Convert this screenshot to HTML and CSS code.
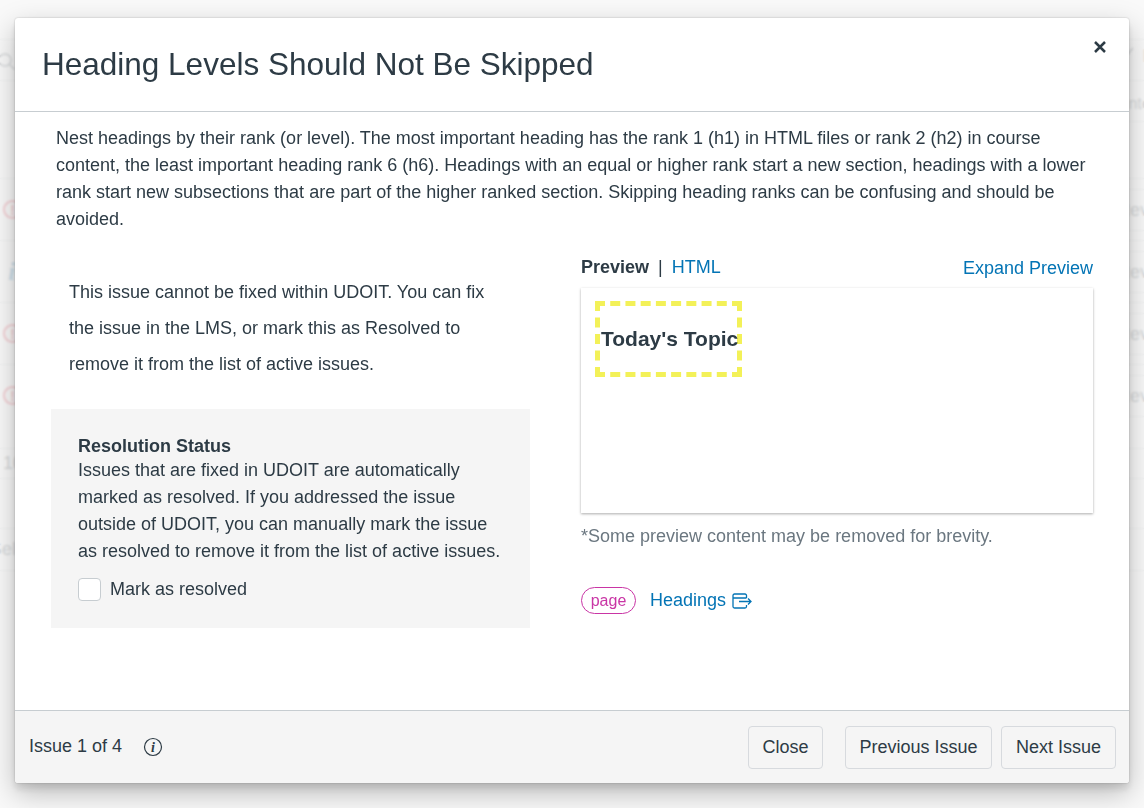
FILE: index.html
```html
<!DOCTYPE html>
<html lang="en">
<head>
    <meta charset="UTF-8">
    <title>Heading Levels Should Not Be Skipped</title>
    <link rel="stylesheet" href="styles.css">
</head>
<body>
<div class="page">
    <div class="toolbar">
        <svg class="search" width="24" height="24" viewBox="0 0 24 24"><circle cx="5" cy="12" r="6"/><path d="M9.500 16.500l5 5"/></svg>
        <div class="filter">
            <svg class="chev" width="12" height="8" viewBox="0 0 12 8"><path d="M1 1l5 6 5-6"/></svg>
            <span class="filter-r">I</span>
        </div>
    </div>
    <div class="thead"><span></span><span class="thead-r">Interact</span></div>
    <div class="row"><span class="alert">!</span><span class="review">Review</span></div>
    <div class="row"><span class="info">i</span><span class="review">Review</span></div>
    <div class="row"><span class="alert">!</span><span class="review">Review</span></div>
    <div class="row"><span class="alert">!</span><span class="review">Review</span></div>
    <div class="pager">10</div>
    <div class="foot">Select</div>
</div>
<div class="overlay"></div>

<div class="modal">
    <div class="modal-head">
        <h1>Heading Levels Should Not Be Skipped</h1>
        <svg class="close-x" width="14" height="14" viewBox="0 0 14 14"><path d="M2 2l10 10M12 2L2 12"/></svg>
    </div>
    <div class="modal-body">
        <p class="desc">Nest headings by their rank (or level). The most important heading has the rank 1 (h1) in HTML files or rank 2 (h2) in course content, the least important heading rank 6 (h6). Headings with an equal or higher rank start a new section, headings with a lower rank start new subsections that are part of the higher ranked section. Skipping heading ranks can be confusing and should be avoided.</p>
        <div class="cols">
            <div class="left">
                <p class="cannot">This issue cannot be fixed within UDOIT. You can fix the issue in the LMS, or mark this as Resolved to remove it from the list of active issues.</p>
                <div class="status">
                    <div class="status-title">Resolution Status</div>
                    <div class="status-text">Issues that are fixed in UDOIT are automatically marked as resolved. If you addressed the issue outside of UDOIT, you can manually mark the issue as resolved to remove it from the list of active issues.</div>
                    <label class="check"><span class="box"></span>Mark as resolved</label>
                </div>
            </div>
            <div class="right">
                <div class="tabs">
                    <div><b>Preview</b><span class="sep">|</span><a class="link">HTML</a></div>
                    <a class="link expand">Expand Preview</a>
                </div>
                <div class="preview">
                    <div class="flagged">Today's Topic</div>
                </div>
                <p class="note">*Some preview content may be removed for brevity.</p>
                <div class="meta">
                    <span class="pill">page</span>
                    <a class="link">Headings</a>
                    <svg class="ext" width="20" height="16" viewBox="0 0 20 16"><path d="M14.500 5V2.500a1.500 1.500 0 0 0-1.500-1.500H2.500A1.500 1.500 0 0 0 1 2.500v11A1.500 1.500 0 0 0 2.500 15H13a1.500 1.500 0 0 0 1.500-1.500V12M1 5h13.500M7 8.500h12M16 5.500l3 3-3 3"/></svg>
                </div>
            </div>
        </div>
    </div>
    <div class="modal-foot">
        <span class="count">Issue 1 of 4</span>
        <svg class="info-ico" width="20" height="20" viewBox="0 0 20 20"><circle cx="10" cy="10" r="8.500"/><text x="10" y="15" text-anchor="middle">i</text></svg>
        <button class="btn btn-close">Close</button>
        <button class="btn btn-prev">Previous Issue</button>
        <button class="btn">Next Issue</button>
    </div>
</div>
</body>
</html>
```

FILE: styles.css
```css
*{
    box-sizing: border-box;
    padding: 0;
    margin: 0;
}
html,body{
    height: 100%;
    overflow: hidden;
}
body{
    font-family: "Liberation Sans", Arial, sans-serif;
    font-size: 18px;
    color: #2D3B45;
    background: #fff;
}

/* page behind the dialog */
.page{
    width: 1144px;
    height: 808px;
    padding-top: 39px;
    overflow: hidden;
    color: #2D3B45;
}
.toolbar{
    height: 42px;
    display: flex;
    justify-content: space-between;
    align-items: center;
    border-top: 1px solid #c7cdd1;
    border-bottom: 1px solid #c7cdd1;
}
.search{
    fill: none;
    stroke: #2D3B45;
    stroke-width: 1.500;
}
.filter{
    display: flex;
    align-items: center;
    gap: 8px;
}
.chev{
    margin-bottom: 18px;
    fill: none;
    stroke: #2D3B45;
    stroke-width: 1.500;
}
.filter-r{
    width: 2px;
    margin-bottom: 8px;
    overflow: hidden;
}
.thead{
    height: 97px;
    display: flex;
    justify-content: space-between;
    padding-top: 14px;
    font-size: 16px;
}
.thead-r{
    height: 27px;
    width: 60px;
    margin-right: -45px;
    border-bottom: 1px solid #c7cdd1;
    text-indent: -5px;
    white-space: nowrap;
    overflow: hidden;
}
.row{
    height: 62px;
    display: flex;
    justify-content: space-between;
    align-items: center;
    border-top: 1px solid #c7cdd1;
}
.alert{
    width: 19px;
    height: 19px;
    margin-left: 3px;
    border: 2px solid #e0061f;
    border-radius: 50%;
    color: #e0061f;
    font-weight: bold;
    font-size: 15px;
    line-height: 15px;
    text-align: center;
}
.info{
    margin-left: 8px;
    font-family: "Liberation Serif", serif;
    font-style: italic;
    font-weight: bold;
    font-size: 26px;
    color: #0374B5;
}
.review{
    width: 60px;
    height: 42px;
    margin-right: -44px;
    border: 1px solid #c7cdd1;
    line-height: 40px;
    font-size: 18px;
    text-indent: -12px;
    white-space: nowrap;
}
.pager{
    height: 31px;
    margin-top: 22px;
    border-top: 1px solid #c7cdd1;
    border-bottom: 1px solid #c7cdd1;
    padding-left: 3px;
    line-height: 29px;
}
.foot{
    height: 43px;
    margin-top: 49px;
    border-top: 1px solid #c7cdd1;
    border-bottom: 1px solid #c7cdd1;
    line-height: 40px;
    text-indent: -10px;
}
.overlay{
    position: fixed;
    top: 0;
    left: 0;
    right: 0;
    bottom: 0;
    background: rgba(248,248,248,0.84);
    backdrop-filter: blur(1px);
}

/* dialog */
.modal{
    position: fixed;
    left: 15px;
    top: 18px;
    width: 1114px;
    height: 765px;
    display: flex;
    flex-direction: column;
    background: #fff;
    border-radius: 3px;
    box-shadow: 0 0 2px rgba(0,0,0,0.25), 0 6px 7px rgba(0,0,0,0.1), 0 10px 28px rgba(0,0,0,0.25);
}
.modal-head{
    height: 94px;
    padding: 26px 27px 0;
    border-bottom: 1px solid #c7cdd1;
    display: flex;
    justify-content: space-between;
}
h1{
    font-size: 31.500px;
    font-weight: normal;
    line-height: 40px;
}
.close-x{
    margin: -4px -5px 0 0;
    fill: none;
    stroke: #2D3B45;
    stroke-width: 2.500;
}
.modal-body{
    flex: 1;
    padding: 13px 41px 0;
}
.desc{
    line-height: 27px;
}
.cols{
    display: flex;
    margin: 21px -5px 0 -5px;
    gap: 51px;
}
.left{
    width: 479px;
    flex-shrink: 0;
}
.cannot{
    padding: 0 18px;
    line-height: 36px;
    margin-top: 20px;
}
.status{
    margin-top: 27px;
    height: 219px;
    padding: 27px;
    background: #f5f5f5;
    line-height: 27px;
}
.status-title{
    font-weight: bold;
    line-height: 21px;
}
.check{
    display: flex;
    align-items: center;
    gap: 9px;
    margin-top: 11px;
}
.box{
    width: 23px;
    height: 23px;
    background: #fff;
    border: 1px solid #c7cdd1;
    border-radius: 4px;
}
.right{
    width: 512px;
    flex-shrink: 0;
}
.tabs{
    display: flex;
    justify-content: space-between;
    line-height: 27px;
    height: 34px;
}
.sep{
    margin: 0 9px;
}
.link{
    color: #0374B5;
}
.expand{
    padding-top: 1px;
}
.preview{
    height: 225px;
    padding: 13px 14px;
    box-shadow: 0 1px 3px rgba(0,0,0,0.2), 0 1px 2px rgba(0,0,0,0.15);
}
.flagged{
    width: 147px;
    height: 76px;
    padding-left: 1px;
    border: 5px dashed #f3f158;
    line-height: 65px;
    font-size: 21px;
    font-weight: bold;
    white-space: nowrap;
}
.note{
    margin-top: 10px;
    line-height: 27px;
    color: #6B7780;
}
.meta{
    display: flex;
    align-items: center;
    margin-top: 37px;
}
.pill{
    height: 27px;
    width: 55px;
    margin-right: 14px;
    border: 1px solid #C935A5;
    border-radius: 14px;
    color: #C935A5;
    font-size: 16px;
    line-height: 25px;
    text-align: center;
}
.ext{
    margin-left: 6px;
    fill: none;
    stroke: #0374B5;
    stroke-width: 1.300;
}
.modal-foot{
    height: 73px;
    padding: 0 13px 0 14px;
    display: flex;
    align-items: center;
    background: #f5f5f5;
    border-top: 1px solid #c7cdd1;
    border-radius: 0 0 3px 3px;
}
.count{
    padding-bottom: 2px;
}
.info-ico{
    margin-left: 21px;
    fill: none;
    stroke: #2D3B45;
    stroke-width: 1.200;
}
.info-ico text{
    fill: #2D3B45;
    stroke: none;
    font-family: "Liberation Serif", serif;
    font-style: italic;
    font-weight: bold;
    font-size: 14px;
}
.btn{
    height: 43px;
    padding: 0 14px;
    margin-left: 9px;
    border: 1px solid #d7dade;
    border-radius: 4px;
    background: #f5f5f5;
    color: #2D3B45;
    font-family: inherit;
    font-size: 18px;
}
.btn-close{
    width: 75px;
    padding: 0;
    margin-left: auto;
    margin-right: 13px;
}
.btn-prev{
    width: 147px;
    padding: 0;
}
```
